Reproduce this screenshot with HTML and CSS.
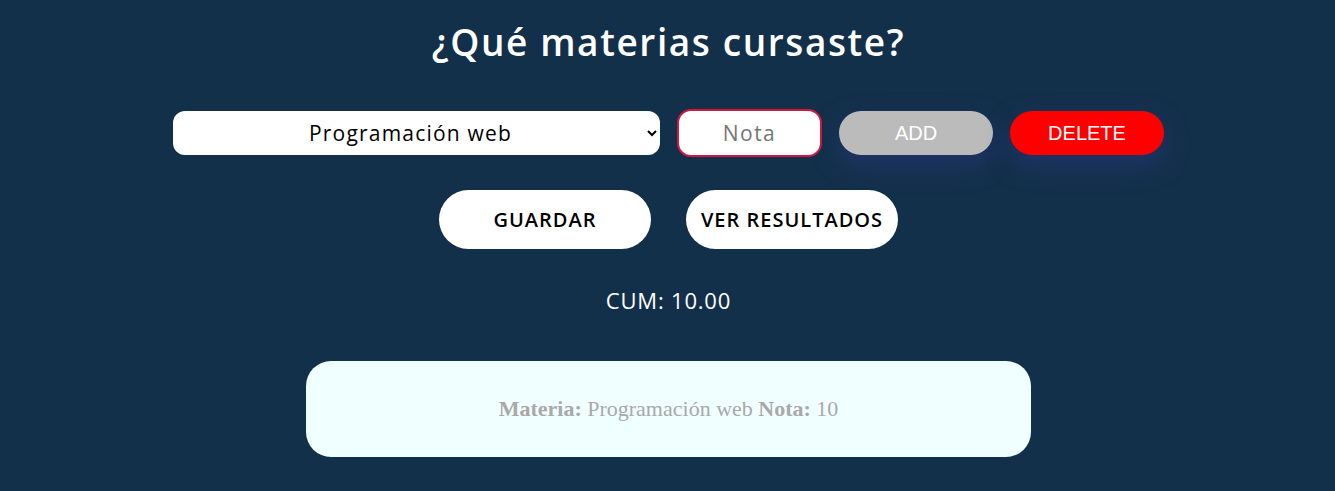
FILE: index.html
```html
<!DOCTYPE html>
<html lang="es">
<head>
<meta charset="utf-8">
<title>Materias</title>
<link rel="stylesheet" href="styles.css">
</head>
<body>
<main class="page">
  <h1 class="title">¿Qué materias cursaste?</h1>
  <div class="form-row">
    <select class="subject">
      <option>Programación web</option>
    </select>
    <input class="grade" type="text" placeholder="Nota">
    <button class="btn-small btn-add">ADD</button>
    <button class="btn-small btn-delete">DELETE</button>
  </div>
  <div class="action-row">
    <button class="btn-big">GUARDAR</button>
    <button class="btn-big">VER RESULTADOS</button>
  </div>
  <p class="cum">CUM: 10.00</p>
  <div class="card">
    <p class="card-text"><b>Materia:</b> Programación web <b>Nota:</b> 10</p>
  </div>
</main>
</body>
</html>
```
FILE: styles.css
```css
html, body {
  margin: 0;
  padding: 0;
  background: #13304b;
  height: 100%;
}
body {
  font-family: "Open Sans", "Noto Sans", sans-serif;
  color: #fff;
}
.page {
  display: flex;
  flex-direction: column;
  align-items: center;
  padding-top: 17px;
  padding-left: 2px;
}
.title {
  margin: 0;
  font-size: 37px;
  font-weight: 600;
  line-height: 50px;
  letter-spacing: 1.6px;
}
.form-row {
  margin-top: 42px;
  display: flex;
  align-items: center;
  gap: 17px;
}
.subject {
  width: 487px;
  height: 44px;
  border: none;
  border-radius: 12px;
  background: #fff;
  font-family: "Open Sans", sans-serif;
  font-size: 21px;
  letter-spacing: 1.2px;
  color: #000;
  text-align: center;
  text-align-last: center;
  padding: 0 6px;
}
.grade {
  box-sizing: border-box;
  width: 145px;
  height: 48px;
  border: 2px solid #d4173f;
  border-radius: 14px;
  background: #fff;
  font-family: "Open Sans", sans-serif;
  font-size: 21px;
  letter-spacing: 1.5px;
  text-align: center;
  outline: none;
}
.grade::placeholder {
  color: #757575;
}
.btn-small {
  width: 154px;
  height: 44px;
  border: none;
  border-radius: 22px;
  font-family: "Liberation Sans", Arial, sans-serif;
  font-size: 20px;
  color: #fff;
  box-shadow: 0 10px 24px rgba(45, 55, 130, 0.55);
}
.btn-add {
  background: #bbbbbb;
}
.btn-delete {
  background: #ff0000;
}
.action-row {
  margin-top: 33px;
  display: flex;
  gap: 35px;
}
.btn-big {
  width: 212px;
  height: 59px;
  border: none;
  border-radius: 30px;
  background: #fff;
  color: #000;
  font-family: "Open Sans", sans-serif;
  font-weight: 600;
  font-size: 20px;
  letter-spacing: 1px;
}
.cum {
  margin: 36px 0 0;
  font-size: 22px;
  line-height: 30px;
  letter-spacing: 0.8px;
}
.card {
  margin-top: 46px;
  width: 725px;
  height: 96px;
  border-radius: 25px;
  background: #f0ffff;
  display: flex;
  align-items: center;
  justify-content: center;
}
.card-text {
  margin: 0;
  font-family: "Liberation Serif", "Times New Roman", serif;
  font-size: 22px;
  color: #a9a9a9;
}
```
